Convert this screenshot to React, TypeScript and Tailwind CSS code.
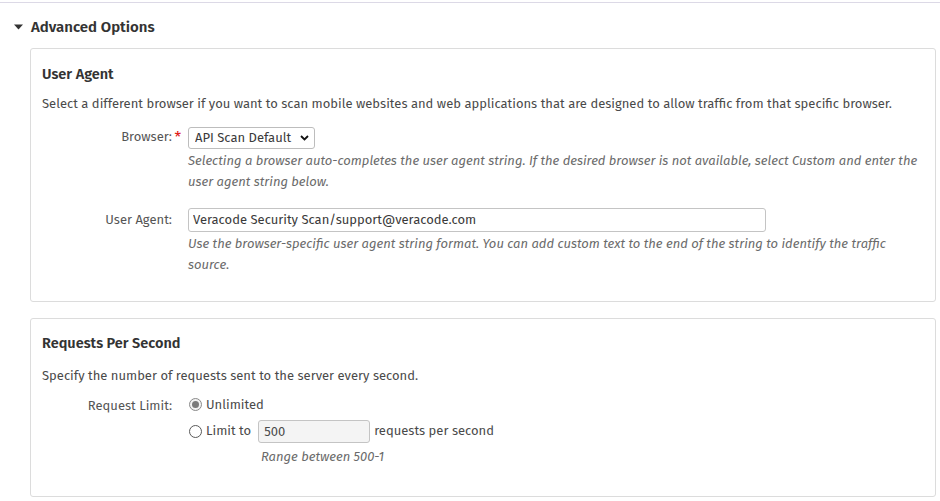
import React, { useState } from 'react';

const font = { fontFamily: '"Fira Sans", "Open Sans", "Noto Sans", sans-serif' };

const Radio: React.FC<{ checked: boolean; onClick: () => void }> = ({ checked, onClick }) => (
  <span
    onClick={onClick}
    className={`inline-flex h-[13px] w-[13px] shrink-0 items-center justify-center rounded-full border ${
      checked ? 'border-[#8a8a8a] bg-[#f2f2f2]' : 'border-[#595959] bg-white'
    }`}
  >
    {checked && <span className="h-[7px] w-[7px] rounded-full bg-[#7a7a7a]" />}
  </span>
);

const Label: React.FC<{ text: string; required?: boolean }> = ({ text, required }) => (
  <div className="w-[130px] shrink-0 text-right">
    <span className="relative text-[13px] text-[#555]">
      {text}
      {required && <span className="absolute -right-[9px] -top-[3px] text-[15px] text-[#e0201c]">*</span>}
    </span>
  </div>
);

export default function App() {
  const [limit, setLimit] = useState<'unlimited' | 'limit'>('unlimited');

  return (
    <div style={font} className="min-h-[501px] w-[940px] bg-white pt-[2px] text-[#3a3a3a]">
      <div className="border-t border-[#dcd9e6]">
        <div className="flex h-[45px] items-center pl-[14px] pt-[3px]">
          <svg width="9" height="6" viewBox="0 0 9 6" className="mr-[8px]">
            <path d="M0 0.5 L9 0.5 L4.5 5.5 Z" fill="#333" />
          </svg>
          <span className="text-[15px] font-semibold text-[#333]">Advanced Options</span>
        </div>

        <div className="mr-[4px] ml-[30px] flex flex-col gap-[16px]">
          <section className="rounded-[3px] border border-[#dcdcdc] px-[11px] pb-[26px] pt-[15px]">
            <h3 className="text-[14.5px] font-semibold leading-[20px] text-[#333]">User Agent</h3>
            <p className="mt-[10px] text-[13px] leading-[20px] text-[#4a4a4a]">
              Select a different browser if you want to scan mobile websites and web applications that are designed to
              allow traffic from that specific browser.
            </p>

            <div className="mt-[11px] flex items-start gap-[16px]">
              <div className="flex h-[22px] items-center">
                <Label text="Browser:" required />
              </div>
              <div className="flex-1">
                <div className="relative inline-flex">
                  <select className="h-[22px] appearance-none rounded-[3px] border border-[#bdbdbd] bg-white pl-[6px] pr-[22px] text-[13px] text-[#3a3a3a] outline-none">
                    <option>API Scan Default</option>
                    <option>Custom</option>
                  </select>
                  <svg
                    width="9"
                    height="6"
                    viewBox="0 0 9 6"
                    className="pointer-events-none absolute right-[6px] top-[8px]"
                  >
                    <path d="M1 1 L4.5 4.5 L8 1" stroke="#111" strokeWidth="1.8" fill="none" />
                  </svg>
                </div>
                <p className="mt-[1px] text-[13px] italic leading-[21px] text-[#6a6a6a]">
                  Selecting a browser auto-completes the user agent string. If the desired browser is not available,
                  select Custom and enter the user agent string below.
                </p>
              </div>
            </div>

            <div className="mt-[15px] flex items-start gap-[16px]">
              <div className="flex h-[24px] items-center">
                <Label text="User Agent:" />
              </div>
              <div className="flex-1">
                <input
                  defaultValue="Veracode Security Scan/support@veracode.com"
                  className="h-[24px] w-[578px] rounded-[3px] border border-[#c4c4c4] px-[4px] text-[13px] text-[#3a3a3a] outline-none"
                />
                <p className="mt-[1px] pr-[20px] text-[13px] italic leading-[21px] text-[#6a6a6a]">
                  Use the browser-specific user agent string format. You can add custom text to the end of the string to
                  identify the traffic source.
                </p>
              </div>
            </div>
          </section>

          <section className="rounded-[3px] border border-[#dcdcdc] px-[11px] pb-[29px] pt-[14px]">
            <h3 className="text-[14.5px] font-semibold leading-[20px] text-[#333]">Requests Per Second</h3>
            <p className="mt-[13px] text-[13px] leading-[20px] text-[#4a4a4a]">
              Specify the number of requests sent to the server every second.
            </p>

            <div className="mt-[9px] flex items-start gap-[16px]">
              <div className="flex h-[20px] items-center">
                <Label text="Request Limit:" />
              </div>
              <div className="flex-1">
                <div className="flex h-[20px] items-center gap-[4px] pl-[1px]">
                  <Radio checked={limit === 'unlimited'} onClick={() => setLimit('unlimited')} />
                  <span className="text-[13px] text-[#4a4a4a]">Unlimited</span>
                </div>
                <div className="mt-[5px] flex h-[23px] items-center pl-[1px]">
                  <Radio checked={limit === 'limit'} onClick={() => setLimit('limit')} />
                  <span className="ml-[4px] text-[13px] text-[#4a4a4a]">Limit to</span>
                  <input
                    defaultValue="500"
                    disabled={limit !== 'limit'}
                    className="ml-[7px] h-[23px] w-[112px] rounded-[3px] border border-[#c4c4c4] bg-[#f4f4f4] px-[5px] text-[13px] text-[#4a4a4a] outline-none"
                  />
                  <span className="ml-[4px] text-[13px] text-[#4a4a4a]">requests per second</span>
                </div>
                <p className="mt-[4px] pl-[73px] text-[13px] italic leading-[20px] text-[#6a6a6a]">
                  Range between 500-1
                </p>
              </div>
            </div>
          </section>
        </div>
      </div>
    </div>
  );
}
